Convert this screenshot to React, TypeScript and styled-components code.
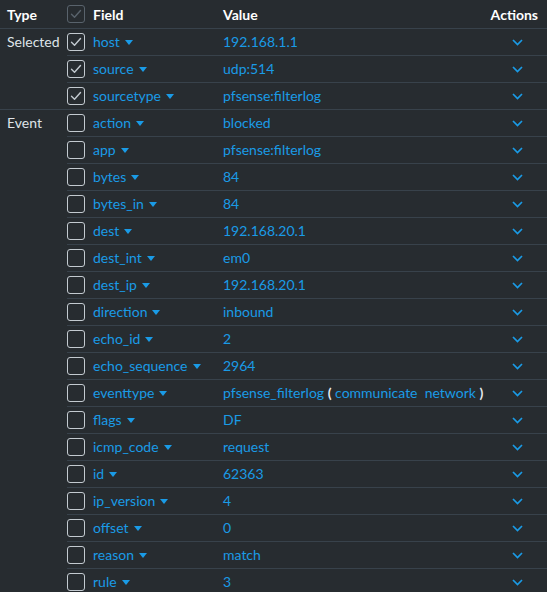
import styled, { createGlobalStyle } from "styled-components";

const GlobalStyle = createGlobalStyle`
  html, body {
    margin: 0;
    padding: 0;
    background: #272c30;
  }
  body {
    font-family: Lato, "Liberation Sans", sans-serif;
  }
`;

const Table = styled.div`
  background: #272c30;
  color: #dfe4e8;
  font-size: 14px;
  width: 547px;
`;

const HeaderRow = styled.div`
  align-items: center;
  border-bottom: 1px solid #38424b;
  display: flex;
  height: 28px;
`;

const HeaderCell = styled.div<{ $w?: number; $right?: boolean; $pad?: number }>`
  color: #ffffff;
  font-weight: bold;
  flex: ${(p) => (p.$w ? `0 0 ${p.$w}px` : "1")};
  box-sizing: border-box;
  padding-left: ${(p) => p.$pad ?? 0}px;
  padding-right: ${(p) => (p.$right ? 9 : 0)}px;
  text-align: ${(p) => (p.$right ? "right" : "left")};
`;

const Group = styled.div`
  border-bottom: 1px solid #38424b;
  display: flex;
`;

const TypeCell = styled.div`
  flex: 0 0 60px;
  padding: 5px 0 0 7px;
  box-sizing: border-box;
  line-height: 16px;
`;

const Rows = styled.div`
  flex: 1;
  margin-left: 7px;
`;

const Row = styled.div`
  align-items: center;
  display: flex;
  height: 26px;
  line-height: 16px;
  & + & {
    border-top: 1px solid #38424b;
  }
`;

const CheckCell = styled.div`
  flex: 0 0 26px;
  display: flex;
  align-items: center;
`;

const Box = styled.div<{ $dim?: boolean }>`
  align-items: center;
  border: 1px solid ${(p) => (p.$dim ? "#59636c" : "#c3cad0")};
  border-radius: 3px;
  box-sizing: border-box;
  display: flex;
  height: 18px;
  justify-content: center;
  width: 18px;
`;

const FieldCell = styled.div`
  color: #1a9be6;
  flex: 0 0 130px;
  display: flex;
  align-items: center;
  gap: 5px;
`;

const ValueCell = styled.div`
  color: #1a9be6;
  flex: 1;
  white-space: nowrap;
`;

const Paren = styled.span`
  color: #e6eaee;
  font-weight: bold;
`;

const ActionCell = styled.div`
  flex: 0 0 52px;
  display: flex;
  justify-content: center;
  padding-right: 4px;
`;

const Check = ({ dim }: { dim?: boolean }) => (
  <svg width="12" height="10" viewBox="0 0 12 10">
    <path
      d="M1.5 5.2 L4.5 8.2 L10.5 1.5"
      fill="none"
      stroke={dim ? "#59636c" : "#c3cad0"}
      strokeWidth="1.4"
      strokeLinecap="round"
      strokeLinejoin="round"
    />
  </svg>
);

const Caret = () => (
  <svg width="8" height="5" viewBox="0 0 8 5">
    <path d="M0 0 H8 L4 5 Z" fill="#1a9be6" />
  </svg>
);

const Chevron = () => (
  <svg width="11" height="7" viewBox="0 0 11 7">
    <path
      d="M1 1 L5.5 5.5 L10 1"
      fill="none"
      stroke="#1a9be6"
      strokeWidth="1.7"
    />
  </svg>
);

type Field = { name: string; value: React.ReactNode; checked?: boolean };

const selected: Field[] = [
  { name: "host", value: "192.168.1.1", checked: true },
  { name: "source", value: "udp:514", checked: true },
  { name: "sourcetype", value: "pfsense:filterlog", checked: true },
];

const events: Field[] = [
  { name: "action", value: "blocked" },
  { name: "app", value: "pfsense:filterlog" },
  { name: "bytes", value: "84" },
  { name: "bytes_in", value: "84" },
  { name: "dest", value: "192.168.20.1" },
  { name: "dest_int", value: "em0" },
  { name: "dest_ip", value: "192.168.20.1" },
  { name: "direction", value: "inbound" },
  { name: "echo_id", value: "2" },
  { name: "echo_sequence", value: "2964" },
  {
    name: "eventtype",
    value: (
      <>
        pfsense_filterlog <Paren>(</Paren> communicate&nbsp; network <Paren>)</Paren>
      </>
    ),
  },
  { name: "flags", value: "DF" },
  { name: "icmp_code", value: "request" },
  { name: "id", value: "62363" },
  { name: "ip_version", value: "4" },
  { name: "offset", value: "0" },
  { name: "reason", value: "match" },
  { name: "rule", value: "3" },
];

const FieldGroup = ({ label, fields }: { label: string; fields: Field[] }) => (
  <Group>
    <TypeCell>{label}</TypeCell>
    <Rows>
      {fields.map((f) => (
        <Row key={f.name}>
          <CheckCell>
            <Box>{f.checked && <Check />}</Box>
          </CheckCell>
          <FieldCell>
            {f.name}
            <Caret />
          </FieldCell>
          <ValueCell>{f.value}</ValueCell>
          <ActionCell>
            <Chevron />
          </ActionCell>
        </Row>
      ))}
    </Rows>
  </Group>
);

export default function App() {
  return (
    <>
      <GlobalStyle />
      <Table>
        <HeaderRow>
          <HeaderCell $w={67} $pad={7}>
            Type
          </HeaderCell>
          <HeaderCell $w={26}>
            <Box $dim>
              <Check dim />
            </Box>
          </HeaderCell>
          <HeaderCell $w={130}>Field</HeaderCell>
          <HeaderCell>Value</HeaderCell>
          <HeaderCell $w={56} $right>
            Actions
          </HeaderCell>
        </HeaderRow>
        <FieldGroup label="Selected" fields={selected} />
        <FieldGroup label="Event" fields={events} />
      </Table>
    </>
  );
}
